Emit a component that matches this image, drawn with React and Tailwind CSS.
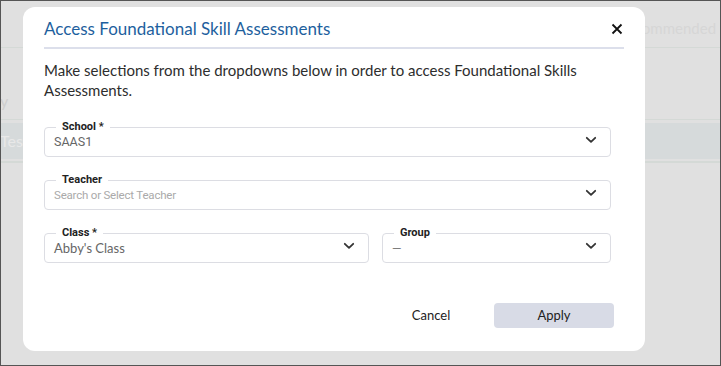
import React from "react";

const Chevron = () => (
  <svg width="12" height="8" viewBox="0 0 12 8" className="mt-[3px] shrink-0" fill="none">
    <path d="M1.8 1.8 L6 5.8 L10.2 1.8" stroke="#333" strokeWidth="1.8" strokeLinecap="round" strokeLinejoin="round" />
  </svg>
);

const Field = ({ label, value, valueClass }) => (
  <fieldset className="border border-[#dcdde3] rounded-[4px] min-w-0">
    <legend className="ml-[11px] px-[6px] text-[11px] leading-[12px] font-bold text-[#222] font-['Roboto',sans-serif]">
      {label}
    </legend>
    <div className="h-[23px] flex items-start justify-between pl-[9px] pr-[13px]">
      <span className={"leading-[18px] whitespace-nowrap " + valueClass}>{value}</span>
      <Chevron />
    </div>
  </fieldset>
);

export default function App() {
  return (
    <div className="relative w-[721px] h-[366px] overflow-hidden border border-[#555] bg-[#e0e0e0] font-['Lato',sans-serif]">
      {/* underlying page */}
      <div className="h-[47px] border-b border-[#d4d9d6] flex items-center pt-[8px]">
        <span className="pl-[617px] whitespace-nowrap text-[15px] text-[#d6d6d6]">Recommended</span>
      </div>
      <div className="h-[72px] border-b border-[#d4d9d6] flex items-end pb-[8px]">
        <span className="text-[16px] text-[#cfcfcf] leading-[20px] -ml-[1px]">y</span>
      </div>
      <div className="mt-[3px] h-[36px] bg-[#d6dadb] flex items-center">
        <span className="text-[16px] text-[#e8e8e8] -ml-[1px]">Test</span>
      </div>
      <div className="mt-[2px] h-[2px] bg-[#d4d9d6]" />

      {/* modal */}
      <div className="absolute left-[22px] top-[6px] w-[622px] h-[344px] bg-white rounded-[12px] flex flex-col">
        <div className="px-[21px] pt-[10px]">
          <div className="h-[24px] flex items-center justify-between">
            <h2 className="text-[17px] text-[#1e5f9e] leading-[24px]">Access Foundational Skill Assessments</h2>
            <svg width="12" height="12" viewBox="0 0 12 12" className="mr-[1px]">
              <path d="M1.5 1.5 L10.5 10.5 M10.5 1.5 L1.5 10.5" stroke="#111" strokeWidth="1.8" />
            </svg>
          </div>
          <div className="mt-[6px] h-[2px] bg-[#dcdfeb]" />
          <p className="mt-[11px] text-[15px] leading-[20px] text-[#2d2d2d]">
            Make selections from the dropdowns below in order to access Foundational Skills
            <br />
            Assessments.
          </p>
        </div>
        <div className="pl-[21px] pr-[34px] mt-[21px] flex flex-col gap-[17px]">
          <Field label="School *" value="SAAS1" valueClass="text-[12.5px] text-[#666] font-['Roboto',sans-serif]" />
          <Field label="Teacher" value="Search or Select Teacher" valueClass="text-[11.5px] text-[#aaa] font-['Roboto',sans-serif] tracking-[-0.2px]" />
          <div className="grid grid-cols-[325px_1fr] gap-[13px]">
            <Field label="Class *" value="Abby's Class" valueClass="text-[13px] text-[#666]" />
            <Field label="Group" value="—" valueClass="text-[12px] text-[#666]" />
          </div>
        </div>
        <div className="mt-[40px] pr-[31px] flex justify-end items-center gap-[23px]">
          <button className="w-[80px] h-[25px] text-[13px] text-[#222]">Cancel</button>
          <button className="w-[120px] h-[25px] rounded-[4px] bg-[#d8dbe6] text-[13px] text-[#222]">Apply</button>
        </div>
      </div>
    </div>
  );
}
